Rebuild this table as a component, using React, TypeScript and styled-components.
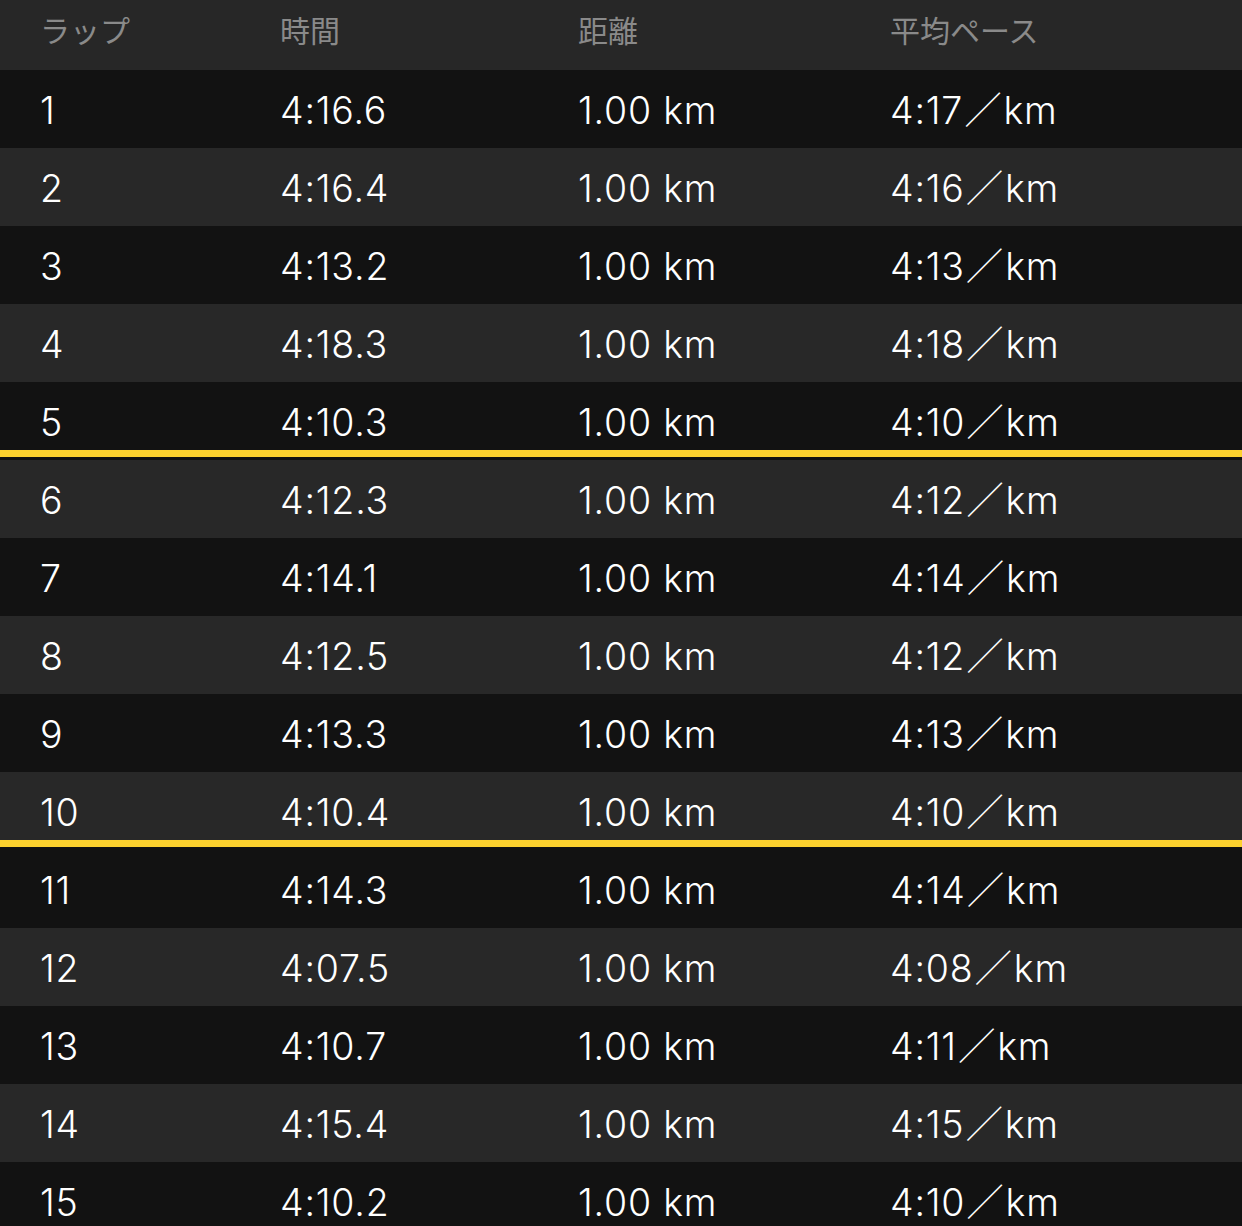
import styled, { createGlobalStyle } from 'styled-components';

const GlobalStyle = createGlobalStyle`
  html, body {
    margin: 0;
    padding: 0;
    background: #121212;
  }
  body {
    font-family: Inter, "Noto Sans CJK JP", sans-serif;
  }
`;

const Table = styled.div`
  width: 1242px;
  height: 1226px;
  overflow: hidden;
  background: #121212;
`;

const Grid = styled.div`
  display: grid;
  grid-template-columns: 240px 298px 312px 1fr;
  align-items: center;
  padding-left: 40px;
  box-sizing: border-box;
`;

const HeaderRow = styled(Grid)`
  height: 70px;
  padding-bottom: 12px;
  background: #272727;
  color: #8a8a8a;
  font-family: "Noto Sans CJK JP", sans-serif;
  font-size: 30px;
  line-height: 1;
`;

const Row = styled(Grid)<{ $alt: boolean; $split: boolean }>`
  position: relative;
  height: 78px;
  padding-top: 4px;
  background: ${(p) => (p.$alt ? '#282828' : '#121212')};
  color: #ffffff;
  font-size: 37.5px;
  font-weight: 300;
  letter-spacing: 0.8px;
  line-height: 1;

  &::after {
    content: '';
    display: ${(p) => (p.$split ? 'block' : 'none')};
    position: absolute;
    left: 0;
    right: 0;
    bottom: 0;
    height: 7px;
    background: #fcd12e;
    border-bottom: 3px solid #111111;
  }
`;

const Cell = styled.span`
  display: block;
  white-space: nowrap;
`;

const Slash = styled.span`
  display: inline-block;
  line-height: 1;
  vertical-align: top;
  margin: 0 1px;
`;

const laps = [
  ['4:16.6', '4:17'],
  ['4:16.4', '4:16'],
  ['4:13.2', '4:13'],
  ['4:18.3', '4:18'],
  ['4:10.3', '4:10'],
  ['4:12.3', '4:12'],
  ['4:14.1', '4:14'],
  ['4:12.5', '4:12'],
  ['4:13.3', '4:13'],
  ['4:10.4', '4:10'],
  ['4:14.3', '4:14'],
  ['4:07.5', '4:08'],
  ['4:10.7', '4:11'],
  ['4:15.4', '4:15'],
  ['4:10.2', '4:10'],
];

export default function App() {
  return (
    <>
      <GlobalStyle />
      <Table>
        <HeaderRow>
          <Cell>ラップ</Cell>
          <Cell>時間</Cell>
          <Cell>距離</Cell>
          <Cell>平均ペース</Cell>
        </HeaderRow>
        {laps.map(([time, pace], i) => (
          <Row key={i} $alt={i % 2 === 1} $split={(i + 1) % 5 === 0 && i < 14}>
            <Cell>{i + 1}</Cell>
            <Cell>{time}</Cell>
            <Cell>1.00 km</Cell>
            <Cell>
              {pace}
              <Slash>／</Slash>km
            </Cell>
          </Row>
        ))}
      </Table>
    </>
  );
}
